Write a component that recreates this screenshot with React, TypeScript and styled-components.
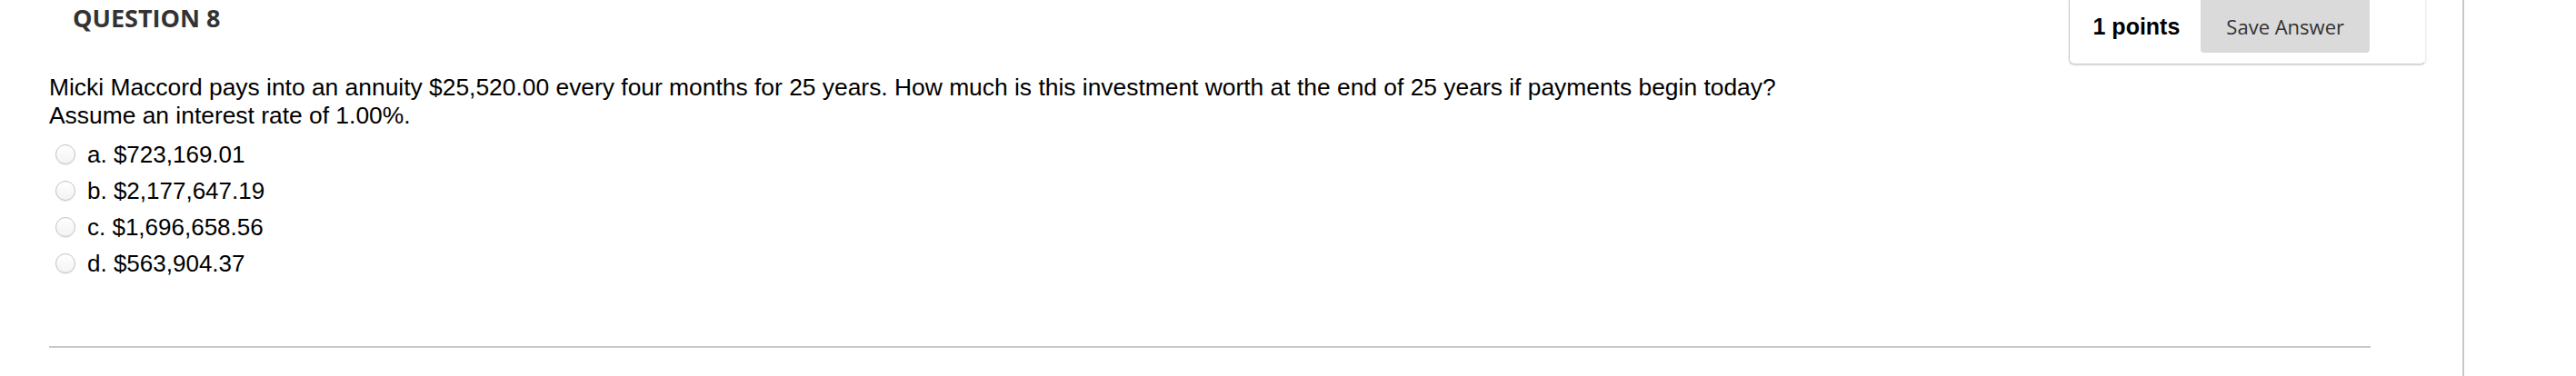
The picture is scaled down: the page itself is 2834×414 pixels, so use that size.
import styled, { createGlobalStyle } from 'styled-components';

const GlobalStyle = createGlobalStyle`
  html, body {
    margin: 0;
    padding: 0;
    background: #fff;
  }
`;

const Page = styled.div`
  display: flex;
  min-height: 414px;
  overflow: hidden;
`;

const Main = styled.div`
  width: 2711px;
  flex-shrink: 0;
  border-right: 2px solid #c8c8c8;
  box-sizing: border-box;
  padding: 0 101px 0 54px;
`;

const Header = styled.div`
  display: flex;
  justify-content: space-between;
  align-items: flex-start;
`;

const Title = styled.h2`
  margin: 0;
  padding: 2px 0 0 26px;
  font-family: "Open Sans", sans-serif;
  font-weight: 700;
  font-size: 27px;
  line-height: 36px;
  color: #333;
`;

const PointsBox = styled.div`
  display: flex;
  align-items: flex-start;
  gap: 23px;
  height: 71px;
  box-sizing: border-box;
  padding: 0 61px 0 26px;
  margin-right: -61px;
  border: 1px solid #c8c8c8;
  border-top: none;
  border-right-color: #eeeeee;
  border-radius: 0 0 6px 6px;
  box-shadow: 0 1px 2px rgba(0, 0, 0, 0.14);
`;

const Points = styled.span`
  font-family: "Liberation Sans", Arial, sans-serif;
  font-weight: 700;
  font-size: 25px;
  line-height: 58px;
  color: #000;
`;

const SaveButton = styled.button`
  height: 58px;
  padding: 0 28px;
  border: none;
  border-radius: 0 0 4px 4px;
  background: #dadada;
  font-family: "Open Sans", sans-serif;
  font-size: 22px;
  color: #333;
`;

const QuestionText = styled.p`
  margin: 10px 0 7px;
  font-family: "Liberation Sans", Arial, sans-serif;
  font-size: 26.4px;
  line-height: 31px;
  color: #000;
`;

const Options = styled.ul`
  list-style: none;
  margin: 0;
  padding: 0 0 0 7px;
`;

const Option = styled.li`
  display: flex;
  align-items: center;
  gap: 13px;
  height: 40px;
  font-family: "Liberation Sans", Arial, sans-serif;
  font-size: 26px;
  color: #000;
`;

const Radio = styled.span`
  width: 22px;
  height: 22px;
  box-sizing: border-box;
  border-radius: 50%;
  border: 1px solid #c4c4c4;
  background: linear-gradient(#fff, #f3f3f3);
  box-shadow: 0 1px 1px rgba(0, 0, 0, 0.08);
  flex-shrink: 0;
`;

const Divider = styled.hr`
  margin: 71px 0 0;
  border: none;
  height: 2px;
  background: #c8c8c8;
`;

const answers = [
  'a. $723,169.01',
  'b. $2,177,647.19',
  'c. $1,696,658.56',
  'd. $563,904.37',
];

export default function App() {
  return (
    <>
      <GlobalStyle />
      <Page>
        <Main>
          <Header>
            <Title>QUESTION 8</Title>
            <PointsBox>
              <Points>1 points</Points>
              <SaveButton>Save Answer</SaveButton>
            </PointsBox>
          </Header>
          <QuestionText>
            Micki Maccord pays into an annuity $25,520.00 every four months for 25 years. How much is this investment worth at the end of 25 years if payments begin today?
            <br />
            Assume an interest rate of 1.00%.
          </QuestionText>
          <Options>
            {answers.map((a) => (
              <Option key={a}>
                <Radio />
                {a}
              </Option>
            ))}
          </Options>
          <Divider />
        </Main>
      </Page>
    </>
  );
}
